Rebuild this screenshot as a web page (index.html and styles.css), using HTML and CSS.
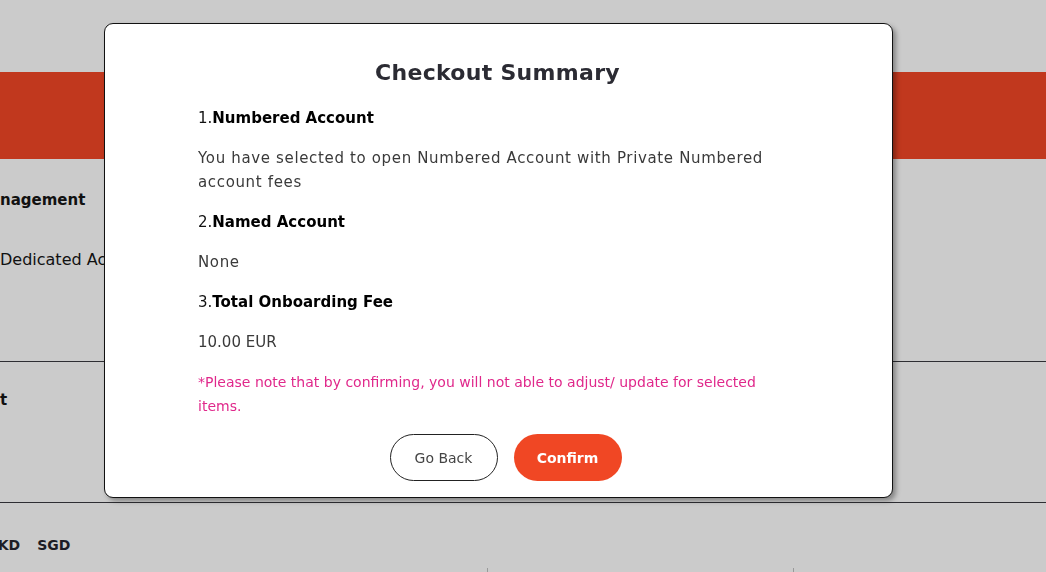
FILE: index.html
```html
<!DOCTYPE html>
<html lang="en">
<head>
<meta charset="utf-8">
<title>Checkout Summary</title>
<link rel="stylesheet" href="styles.css">
</head>
<body>
<div class="page">
  <div class="banner"></div>
  <section class="row row-first">
    <div class="bg-title">nagement</div>
    <div class="bg-text">Dedicated Account</div>
  </section>
  <section class="row row-second">
    <div class="bg-title">t</div>
  </section>
  <section class="row row-third">
    <div class="currencies"><span class="cur cur-clip">HKD</span><span class="cur">SGD</span></div>
    <div class="cols">
      <div class="col"></div>
      <div class="col"></div>
      <div class="col"></div>
    </div>
  </section>
</div>

<div class="overlay">
  <div class="modal">
    <h2 class="modal-title">Checkout Summary</h2>
    <div class="summary">
      <p class="item-head">1.<b>Numbered Account</b></p>
      <p class="item-text">You have selected to open Numbered Account with Private Numbered account fees</p>
      <p class="item-head">2.<b>Named Account</b></p>
      <p class="item-text">None</p>
      <p class="item-head">3.<b>Total Onboarding Fee</b></p>
      <p class="item-text item-amount">10.00 EUR</p>
      <p class="note">*Please note that by confirming, you will not able to adjust/ update for selected items.</p>
    </div>
    <div class="actions">
      <button class="btn btn-outline" type="button">Go Back</button>
      <button class="btn btn-primary" type="button">Confirm</button>
    </div>
  </div>
</div>
</body>
</html>
```

FILE: styles.css
```css
* { box-sizing: border-box; }
html, body { margin: 0; padding: 0; }
body {
  background: #cbcbcb;
  font-family: "DejaVu Sans", "Noto Sans", sans-serif;
  color: #111;
  overflow: hidden;
  height: 572px;
}
.page {
  padding-top: 72px;
  width: 1046px;
}
.banner {
  height: 87px;
  background: #c1381e;
}
.row {
  border-bottom: 1px solid #2e2e33;
}
.row-first {
  height: 203px;
  padding-top: 31px;
}
.row-second {
  height: 141px;
  padding-top: 28px;
}
.row-third {
  border-bottom: none;
  padding-top: 33px;
}
.bg-title {
  font-size: 15px;
  font-weight: bold;
  line-height: 20px;
  color: #111;
}
.bg-text {
  margin-top: 40px;
  font-size: 16px;
  line-height: 20px;
  color: #111;
}
.currencies {
  display: flex;
  gap: 17px;
  font-size: 14px;
  font-weight: bold;
  line-height: 18px;
  color: #1c1c24;
}
.cur-clip { margin-left: -14px; }
.cols {
  display: grid;
  grid-template-columns: 488px 306px 1fr;
  margin-top: 14px;
  height: 20px;
}
.col { border-right: 1px solid #999; }
.col:last-child { border-right: none; }

.overlay {
  position: fixed;
  inset: 0;
}
.modal {
  position: absolute;
  left: 104px;
  top: 23px;
  width: 789px;
  height: 475px;
  background: #fff;
  border: 1px solid #111;
  border-radius: 9px;
  box-shadow: 3px 3px 5px rgba(0,0,0,0.35);
  padding: 36px 95px 16px 93px;
  display: flex;
  flex-direction: column;
}
.modal-title {
  margin: 0;
  text-align: center;
  font-size: 22px;
  line-height: 26px;
  font-weight: bold;
  letter-spacing: 0.3px;
  color: #2b2b33;
}
.summary {
  margin-top: 20px;
  display: flex;
  flex-direction: column;
  gap: 16px;
}
.summary p { margin: 0; }
.item-head {
  font-size: 15px;
  line-height: 24px;
  color: #111;
}
.item-head b { color: #000; }
.item-text {
  font-size: 15px;
  line-height: 24px;
  letter-spacing: 0.65px;
  color: #3a3a3a;
}
.item-amount { letter-spacing: 0; }
.note {
  font-size: 14px;
  line-height: 24px;
  color: #e0288b;
}
.actions {
  margin-top: 16px;
  display: flex;
  justify-content: center;
  gap: 16px;
  padding-left: 16px;
}
.btn {
  height: 47px;
  width: 108px;
  border-radius: 24px;
  font-family: inherit;
  font-size: 14px;
  cursor: pointer;
}
.btn-outline {
  background: #fff;
  border: 1px solid #222;
  color: #444;
}
.btn-primary {
  background: #f04724;
  border: none;
  color: #fff;
  font-weight: 600;
}
```
